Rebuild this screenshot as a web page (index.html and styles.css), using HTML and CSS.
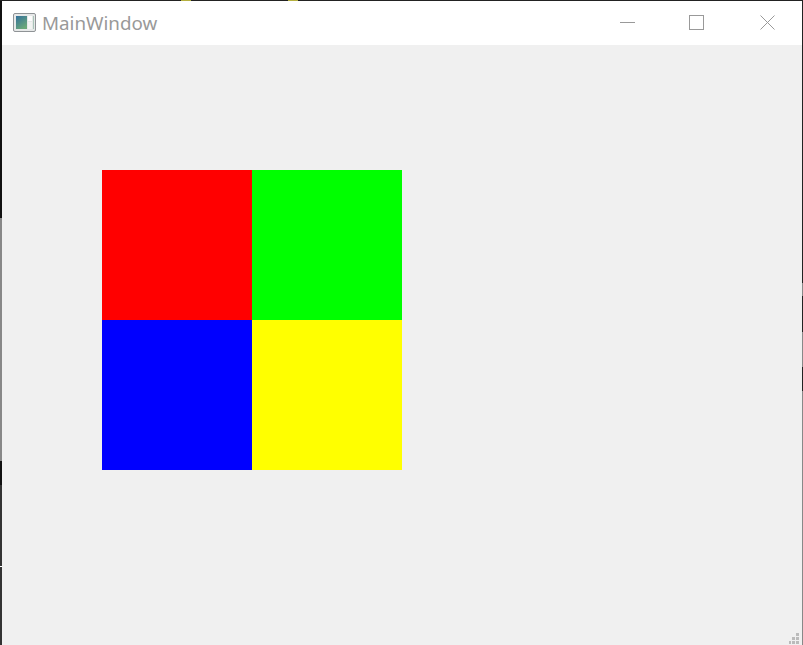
FILE: index.html
```html
<!DOCTYPE HTML>
<html>
<head>
<meta charset="utf-8">
<title>MainWindow</title>
<link rel="stylesheet" href="styles.css">
</head>

<body>
<div class="frame">
	<div class="titlebar">
		<svg class="appicon" width="24" height="20" viewBox="0 0 24 20">
			<defs>
				<linearGradient id="pane" x1="0" y1="0" x2="0.6" y2="1">
					<stop offset="0" stop-color="#33709c"/>
					<stop offset="1" stop-color="#6aa878"/>
				</linearGradient>
			</defs>
			<rect x="0.5" y="0.5" width="22" height="18" rx="1.5" fill="#e6e8e8" stroke="#8f9396"/>
			<rect x="3" y="3" width="11" height="13" fill="url(#pane)"/>
			<rect x="15" y="3" width="4" height="5" fill="#fdfdfd"/>
			<rect x="15" y="9" width="4" height="7" fill="#f2f4f2"/>
			<rect x="20" y="3" width="1" height="13" fill="#a9c4b8"/>
		</svg>
		<span class="title">MainWindow</span>
		<div class="controls">
			<svg width="15" height="16" viewBox="0 0 15 16"><path d="M0 7.5H15" stroke="#999" fill="none"/></svg>
			<svg width="15" height="16" viewBox="0 0 15 16"><rect x="0.5" y="0.5" width="14" height="14" stroke="#999" fill="none"/></svg>
			<svg class="close" width="15" height="16" viewBox="0 0 15 16"><path d="M0.5 0.5L14.5 14.5M14.5 0.5L0.5 14.5" stroke="#999" fill="none"/></svg>
		</div>
	</div>
	<div class="content">
		<div class="quad">
			<div class="red"></div>
			<div class="green"></div>
			<div class="blue"></div>
			<div class="yellow"></div>
		</div>
		<svg class="grip" width="10" height="11" viewBox="0 0 10 11">
			<path d="M7 0h3v3H7zM3 4h3v3H3zM7 4h3v3H7zM0 8h2v3H0zM3 8h3v3H3zM7 8h3v3H7z" fill="#bbb"/>
		</svg>
	</div>
</div>
</body>
</html>
```

FILE: styles.css
```css
html, body {
	margin: 0;
	height: 100%;
	overflow: hidden;
}

/* the desktop behind the window only shows as a thin edge */
body {
	background:
		linear-gradient(to right, #222 0, #222 181px, #b5b040 181px, #b5b040 191px, #222 191px, #222 288px, #b5b040 288px, #b5b040 298px, #222 298px) top left / 100% 1px no-repeat,
		linear-gradient(to bottom, #111 0, #111 218px, #888 218px, #888 461px, #111 461px, #111 485px, #333 485px, #333 566px, #fff 566px, #fff 567px, #333 567px) top left / 2px 100% no-repeat,
		linear-gradient(to bottom, #222 0, #222 283px, #888 283px, #888 296px, #222 296px, #222 332px, #888 332px, #888 367px, #222 367px, #222 391px, #888 391px) top right / 1px 100% no-repeat,
		#222;
}

.frame {
	display: flex;
	flex-direction: column;
	height: 644px;
	margin: 1px 1px 0 2px;
}

.titlebar {
	display: flex;
	align-items: center;
	height: 44px;
	background: #fff;
	flex: none;
}

.appicon {
	margin-left: 11px;
	margin-top: -1px;
}

.title {
	margin-left: 5px;
	margin-top: -1px;
	font-family: "Noto Sans", "Liberation Sans", sans-serif;
	font-size: 18.8px;
	color: #999;
}

.controls {
	display: flex;
	gap: 54px;
	margin-left: auto;
	margin-right: 27px;
}

.controls .close {
	margin-left: 2px;
}

.content {
	position: relative;
	flex: 1;
	background: #f0f0f0;
	padding: 125px 0 0 100px;
}

.quad {
	display: grid;
	grid-template-columns: 150px 150px;
	grid-template-rows: 150px 150px;
	width: 300px;
}

.red { background: #f00; }
.green { background: #0f0; }
.blue { background: #00f; }
.yellow { background: #ff0; }

.grip {
	position: absolute;
	right: 3px;
	bottom: 1px;
}
```
